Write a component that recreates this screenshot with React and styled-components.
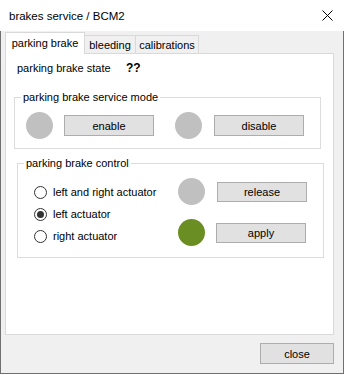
import React from "react";
import styled, { createGlobalStyle } from "styled-components";

const GlobalStyle = createGlobalStyle`
  html, body {
    margin: 0;
    padding: 0;
    background: #ffffff;
  }
  body {
    font-family: "Liberation Sans", Arial, sans-serif;
    font-size: 11px;
    color: #000;
  }
  * {
    box-sizing: border-box;
  }
`;

const Window = styled.div`
  width: 344px;
  height: 374px;
  display: flex;
  flex-direction: column;
`;

const TitleBar = styled.div`
  height: 31px;
  flex: none;
  background: #fff;
  display: flex;
  align-items: center;
  justify-content: space-between;
  padding: 0 11px 0 9px;
  font-size: 11.5px;
`;

const Body = styled.div`
  flex: 1;
  background: #f0f0f0;
  border: 1px solid #707070;
  border-top: none;
  padding: 1px 9px 0 4px;
  display: flex;
  flex-direction: column;
`;

const TabStrip = styled.div`
  display: flex;
  align-items: flex-end;
  height: 21px;
`;

const Tab = styled.div`
  position: relative;
  display: flex;
  align-items: center;
  justify-content: center;
  width: ${(p) => p.$width}px;
  height: ${(p) => (p.$active ? 22 : 18)}px;
  margin-left: ${(p) => (p.$first ? 0 : -1)}px;
  margin-bottom: ${(p) => (p.$active ? -1 : 0)}px;
  padding-bottom: ${(p) => (p.$active ? 2 : 0)}px;
  background: ${(p) => (p.$active ? "#fff" : "#f0f0f0")};
  border: 1px solid #d9d9d9;
  border-bottom: none;
  z-index: ${(p) => (p.$active ? 2 : 1)};
`;

const Panel = styled.div`
  width: 329px;
  height: 282px;
  background: #fff;
  border: 1px solid #d9d9d9;
  display: flex;
  flex-direction: column;
`;

const StateRow = styled.div`
  display: flex;
  align-items: center;
  height: 16px;
  margin: 6px 0 0 11px;
`;

const StateLabel = styled.span`
  width: 109px;
`;

const StateValue = styled.span`
  font-weight: bold;
  font-size: 12px;
`;

const Group = styled.fieldset`
  margin: ${(p) => p.$top}px 0 0 ${(p) => p.$left}px;
  width: 307px;
  padding: 0;
  border: 1px solid #dcdcdc;
  min-width: 0;
`;

const Legend = styled.legend`
  margin-left: 6px;
  padding: 0 2px;
  line-height: 14px;
`;

const ModeRow = styled.div`
  display: flex;
  align-items: center;
  padding: 8px 0 9px 11px;
`;

const Lamp = styled.span`
  flex: none;
  display: block;
  width: 27px;
  height: 27px;
  border-radius: 50%;
  background: ${(p) => p.$color};
  margin-left: ${(p) => p.$gap || 0}px;
`;

const Button = styled.button`
  flex: none;
  width: ${(p) => p.$width || 90}px;
  height: ${(p) => p.$height || 21}px;
  margin-left: ${(p) => p.$gap || 0}px;
  padding: 0;
  background: #e1e1e1;
  border: 1px solid #adadad;
  border-radius: 0;
  font-family: inherit;
  font-size: 11px;
  color: #000;
`;

const ControlBody = styled.div`
  display: flex;
  padding: 0 0 11px 0;
`;

const RadioColumn = styled.div`
  width: 160px;
  padding: 14px 0 0 16px;
  display: flex;
  flex-direction: column;
  gap: 6px;
`;

const RadioRow = styled.label`
  display: flex;
  align-items: center;
  height: 16px;
  gap: 6px;
`;

const RadioDot = styled.span`
  position: relative;
  flex: none;
  width: 13px;
  height: 13px;
  border: 1px solid #333;
  border-radius: 50%;
  background: #fff;
  &::after {
    content: "";
    display: ${(p) => (p.$checked ? "block" : "none")};
    position: absolute;
    left: 2px;
    top: 2px;
    width: 7px;
    height: 7px;
    border-radius: 50%;
    background: #333;
  }
`;

const LampColumn = styled.div`
  display: flex;
  flex-direction: column;
  gap: 14px;
  padding-top: 8px;
`;

const LampRow = styled.div`
  display: flex;
  align-items: center;
`;

const Footer = styled.div`
  display: flex;
  justify-content: flex-end;
  margin-top: 8px;
`;

function CloseIcon() {
  return (
    <svg width="11" height="11" viewBox="0 0 11 11">
      <path d="M0.5 0.5 L10.5 10.5 M10.5 0.5 L0.5 10.5" stroke="#000" strokeWidth="1" fill="none" />
    </svg>
  );
}

const GREY = "#c0c0c0";
const GREEN = "#6b8e23";

export default function App() {
  const actuators = [
    { label: "left and right actuator", checked: false },
    { label: "left actuator", checked: true },
    { label: "right actuator", checked: false },
  ];

  return (
    <>
      <GlobalStyle />
      <Window>
        <TitleBar>
          <span>brakes service / BCM2</span>
          <CloseIcon />
        </TitleBar>
        <Body>
          <TabStrip>
            <Tab $active $first $width={80}>parking brake</Tab>
            <Tab $width={52}>bleeding</Tab>
            <Tab $width={64}>calibrations</Tab>
          </TabStrip>
          <Panel>
            <StateRow>
              <StateLabel>parking brake state</StateLabel>
              <StateValue>??</StateValue>
            </StateRow>

            <Group $top={14} $left={8}>
              <Legend>parking brake service mode</Legend>
              <ModeRow>
                <Lamp $color={GREY} />
                <Button $gap={11}>enable</Button>
                <Lamp $color={GREY} $gap={21} />
                <Button $gap={12}>disable</Button>
              </ModeRow>
            </Group>

            <Group $top={7} $left={11}>
              <Legend>parking brake control</Legend>
              <ControlBody>
                <RadioColumn>
                  {actuators.map((a) => (
                    <RadioRow key={a.label}>
                      <RadioDot $checked={a.checked} />
                      {a.label}
                    </RadioRow>
                  ))}
                </RadioColumn>
                <LampColumn>
                  <LampRow>
                    <Lamp $color={GREY} />
                    <Button $gap={12} $height={20}>release</Button>
                  </LampRow>
                  <LampRow>
                    <Lamp $color={GREEN} />
                    <Button $gap={11} $height={20}>apply</Button>
                  </LampRow>
                </LampColumn>
              </ControlBody>
            </Group>
          </Panel>
          <Footer>
            <Button $width={74}>close</Button>
          </Footer>
        </Body>
      </Window>
    </>
  );
}
